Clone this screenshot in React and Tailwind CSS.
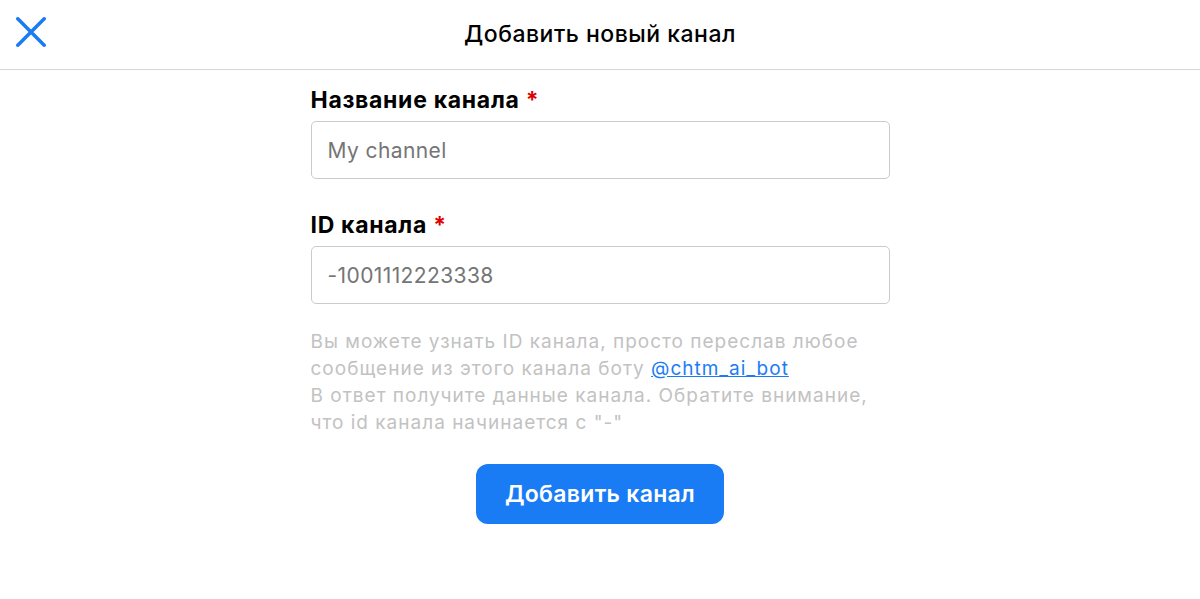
import React, { useState } from "react";

export default function App() {
  const [channel, setChannel] = useState({ name: "", id: "" });

  const handleChange = (e) => {
    setChannel({ ...channel, [e.target.name]: e.target.value });
  };

  return (
    <div className="min-h-[599px] bg-white font-['Inter',sans-serif] text-black">
      {/* Header */}
      <div className="relative flex h-[70px] items-center justify-center border-b border-[#d6d6d6]">
        <button className="absolute left-[16px] top-[17px] flex h-[30px] w-[30px] items-center justify-center text-[#1a7cf5]">
          <svg viewBox="0 0 30 30" className="h-[30px] w-[30px]" fill="none" stroke="currentColor" strokeWidth="3.5" strokeLinecap="round">
            <path d="M1.8 1.8 L28.2 28.2 M28.2 1.8 L1.8 28.2" />
          </svg>
        </button>
        <h1 className="text-[23px] font-medium tracking-[0.5px]">Добавить новый канал</h1>
      </div>

      {/* Form */}
      <form className="mx-auto w-[579px] pt-[15px]" onSubmit={(e) => e.preventDefault()}>
        <label className="block text-[23px] font-bold leading-[30px] tracking-[0.7px]">
          Название канала <span className="text-[#e00000]">*</span>
        </label>
        <input
          type="text"
          name="name"
          placeholder="My channel"
          value={channel.name}
          onChange={handleChange}
          className="mt-[6px] h-[58px] w-full rounded-[5px] border border-[#cbcbcb] px-[16px] text-[21px] tracking-[0.4px] outline-none placeholder:text-[#757575]"
        />

        <label className="mt-[31px] block text-[23px] font-bold leading-[30px] tracking-[0.7px]">
          ID канала <span className="text-[#e00000]">*</span>
        </label>
        <input
          type="text"
          name="id"
          placeholder="-1001112223338"
          value={channel.id}
          onChange={handleChange}
          className="mt-[6px] h-[58px] w-full rounded-[5px] border border-[#cbcbcb] px-[16px] text-[21px] tracking-[0.4px] outline-none placeholder:text-[#757575]"
        />

        <p className="mt-[24px] text-[19px] leading-[27px] tracking-[1px] text-[#c2c2c2]">
          Вы можете узнать ID канала, просто переслав любое
          <br />
          сообщение из этого канала боту{" "}
          <a href="#" className="text-[#1a7cf5] underline">@chtm_ai_bot</a>
          <br />
          В ответ получите данные канала. Обратите внимание,
          <br />
          что id канала начинается с "-"
        </p>

        <div className="mt-[28px] flex justify-center">
          <button
            type="submit"
            className="h-[60px] w-[248px] rounded-[12px] bg-[#1a7cf5] text-[23px] font-semibold tracking-[0.3px] text-white"
          >
            Добавить канал
          </button>
        </div>
      </form>
    </div>
  );
}
